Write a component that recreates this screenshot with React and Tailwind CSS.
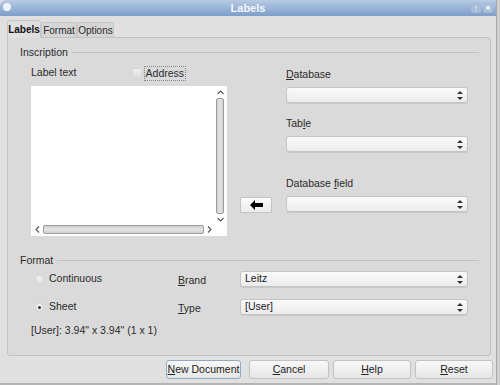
import React from 'react';

const font = { fontFamily: '"Liberation Sans", Arial, sans-serif' };

const Updown = () => (
  <svg width="6" height="9" viewBox="0 0 6 9" className="shrink-0">
    <path d="M3 0 L6 3 L0 3 Z" fill="#333" />
    <path d="M3 9 L6 6 L0 6 Z" fill="#333" />
  </svg>
);

const Chevron = ({ d }) => (
  <svg width="7" height="7" viewBox="0 0 7 7" className="shrink-0">
    <path d={d} fill="none" stroke="#555" strokeWidth="1.1" />
  </svg>
);

const Select = ({ value, className = '' }) => (
  <div
    className={`flex items-center justify-between rounded-[3px] border border-[#c4c4c4] bg-gradient-to-b from-[#fafafa] to-[#ececec] pl-[4px] pr-[4px] shadow-[0_1px_0_#c9c9c9] ${className}`}
  >
    <span className="text-[#222]">{value}</span>
    <Updown />
  </div>
);

const Button = ({ children, focused, className = '' }) => (
  <button
    className={`flex h-[19px] items-center justify-center rounded-[3px] border bg-gradient-to-b from-[#f8f8f8] to-[#e6e6e6] text-[#222] ${
      focused ? 'border-[#8ea9c9]' : 'border-[#c2c2c2]'
    } ${className}`}
  >
    {children}
  </button>
);

const Radio = ({ checked }) => (
  <span className="flex h-[7px] w-[7px] items-center justify-center rounded-full bg-gradient-to-b from-[#f4f4f4] to-[#e2e2e2] shadow-[0_0_1px_#b0b0b0]">
    {checked && <span className="h-[3px] w-[3px] rounded-full bg-[#333]" />}
  </span>
);

export default function App() {
  return (
    <div className="flex h-[385px] w-[500px] bg-[#cfcfcf] text-[10.5px] text-[#2a2a2a]" style={font}>
      <div className="flex w-[497px] flex-col border-r border-[#a9a9a9] bg-[#e0e0e0]">
        {/* title bar */}
        <div className="relative flex h-[16px] items-center justify-center rounded-tl-[6px] bg-gradient-to-b from-[#b7cbe4] to-[#7d9ec8]">
          <span className="absolute left-[3px] top-[3px] h-[8px] w-[8px] rounded-full bg-[#eef2f7]" />
          <span className="text-[11px] font-bold text-[#f4f7fb]">Labels</span>
          <div className="absolute right-[3px] top-[3px] flex gap-[2px]">
            <span className="flex h-[10px] w-[10px] items-center justify-center rounded-[2px] bg-[#a6bcd8] text-[9px] font-bold leading-none text-white">
              ↑
            </span>
            <span className="flex h-[10px] w-[10px] items-center justify-center rounded-[2px] bg-[#a6bcd8] text-[9px] font-bold leading-none text-white">
              ×
            </span>
          </div>
        </div>

        {/* tabs */}
        <div className="ml-[7px] mt-[4px] flex h-[18px] items-end text-[10px]">
          <div className="z-10 flex h-[18px] w-[34px] items-center justify-center rounded-t-[3px] border border-b-0 border-[#c6c6c6] bg-[#e0e0e0] font-bold text-[#111]">
            Labels
          </div>
          <div className="flex h-[16px] w-[36px] items-center justify-center rounded-t-[3px] border border-b-0 border-[#c6c6c6] bg-[#d6d6d6]">
            Format
          </div>
          <div className="flex h-[16px] w-[37px] items-center justify-center rounded-t-[3px] border border-b-0 border-[#c6c6c6] bg-[#d6d6d6]">
            Options
          </div>
        </div>

        {/* panel */}
        <div className="mx-[7px] -mt-px flex h-[319px] w-[484px] flex-col rounded-b-[3px] rounded-tr-[3px] border border-[#c2c2c2] bg-[#dadada] pl-[12px] pr-[11px]">
          <div className="mt-[8px] flex h-[13px] items-center">
            <span>Inscription</span>
            <span className="ml-[4px] h-px flex-1 bg-[#c0c0c0]" />
          </div>

          <div className="flex pl-[11px]">
            {/* label text */}
            <div className="flex w-[196px] flex-col">
              <div className="mt-[7px] flex h-[14px] items-center">
                <span>Label text</span>
                <span className="ml-[56px] h-[8px] w-[8px] rounded-[1px] bg-gradient-to-b from-[#f0f0f0] to-[#dedede] shadow-[0_0_1px_#aaa]" />
                <span className="ml-[3px] border border-dotted border-[#888] px-[1px] leading-[13px]">Address</span>
              </div>
              <div className="mt-[6px] flex h-[150px] w-[196px] flex-col bg-white">
                <div className="flex flex-1">
                  <div className="flex-1" />
                  <div className="mb-[1px] mr-[2px] mt-[3px] flex w-[10px] flex-col items-center gap-[2px]">
                    <Chevron d="M0.5 5 L3.5 2 L6.5 5" />
                    <div className="w-[8px] flex-1 rounded-[2px] border border-[#9c9c9c] bg-gradient-to-r from-[#d0d0d0] via-[#e4e4e4] to-[#cfcfcf]" />
                    <Chevron d="M0.5 2 L3.5 5 L6.5 2" />
                  </div>
                </div>
                <div className="mb-[1px] flex h-[11px] items-center pl-[3px] pr-[14px]">
                  <Chevron d="M5 0.5 L2 3.5 L5 6.5" />
                  <div className="mx-[2px] h-[9px] flex-1 rounded-[2px] border border-[#9c9c9c] bg-gradient-to-b from-[#d0d0d0] via-[#e4e4e4] to-[#cfcfcf]" />
                  <Chevron d="M2 0.5 L5 3.5 L2 6.5" />
                </div>
              </div>
            </div>

            {/* arrow button */}
            <div className="ml-[13px] mt-[138px]">
              <button className="flex h-[16px] w-[32px] items-center justify-center rounded-[2px] border border-[#c4c4c4] bg-gradient-to-b from-[#fbfbfb] to-[#ececec]">
                <svg width="13" height="10" viewBox="0 0 13 10">
                  <path d="M0 5 L5 0 L5 3 L13 3 L13 7 L5 7 L5 10 Z" fill="#000" />
                </svg>
              </button>
            </div>

            {/* database column */}
            <div className="ml-[14px] flex w-[182px] flex-col">
              <div className="mt-[9px] flex h-[14px] items-center">
                <span><u>D</u>atabase</span>
              </div>
              <Select className="mt-[5px] h-[16px]" value="" />
              <div className="mt-[14px] flex h-[14px] items-center">
                <span>Tab<u>l</u>e</span>
              </div>
              <Select className="mt-[5px] h-[16px]" value="" />
              <div className="mt-[25px] flex h-[14px] items-center">
                <span>Database <u>f</u>ield</span>
              </div>
              <Select className="mt-[5px] h-[16px]" value="" />
            </div>
          </div>

          <div className="mt-[18px] flex h-[13px] items-center">
            <span>Format</span>
            <span className="ml-[4px] h-px flex-1 bg-[#c0c0c0]" />
          </div>

          <div className="mt-[6px] flex">
            <div className="flex w-[158px] flex-col pl-[16px]">
              <div className="-mt-[1px] flex h-[14px] items-center gap-[6px]">
                <Radio />
                <span>Continuous</span>
              </div>
              <div className="mt-[14px] flex h-[14px] items-center gap-[6px]">
                <Radio checked />
                <span>Sheet</span>
              </div>
            </div>
            <div className="-mt-[2px] flex flex-col gap-[12px]">
              <div className="flex h-[16px] items-center">
                <span className="mt-[4px] w-[62px]"><u>B</u>rand</span>
                <Select className="h-[16px] w-[228px]" value="Leitz" />
              </div>
              <div className="flex h-[16px] items-center">
                <span className="mt-[4px] w-[62px]"><u>T</u>ype</span>
                <Select className="h-[16px] w-[228px]" value="[User]" />
              </div>
            </div>
          </div>

          <div className="ml-[11px] mt-[9px] flex h-[14px] items-center">
            [User]: 3.94" x 3.94" (1 x 1)
          </div>
        </div>

        {/* buttons */}
        <div className="mr-[3px] mt-[4px] flex justify-end gap-[4px]">
          <Button focused className="mr-[4px] w-[75px]">
            <span><u>N</u>ew Document</span>
          </Button>
          <Button className="w-[80px]">
            <span><u>C</u>ancel</span>
          </Button>
          <Button className="w-[78px]">
            <span><u>H</u>elp</span>
          </Button>
          <Button className="w-[78px]">
            <span><u>R</u>eset</span>
          </Button>
        </div>
        <div className="flex-1" />
        <div className="h-[2px] bg-[#b4b4b4]" />
      </div>
      <div className="flex-1" />
    </div>
  );
}
